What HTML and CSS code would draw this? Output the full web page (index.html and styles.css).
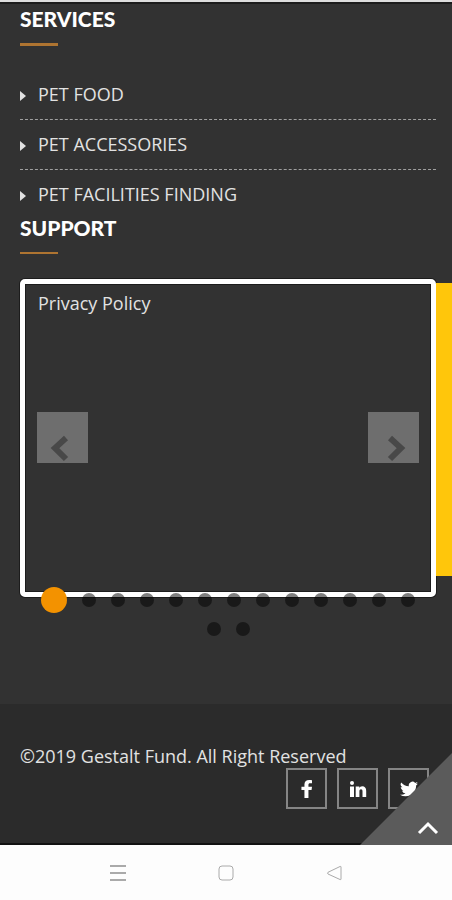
FILE: index.html
```html
<!DOCTYPE html>
<html lang="en">
<head>
  <meta charset="utf-8">
  <meta name="viewport" content="width=device-width, initial-scale=1">
  <title>Gestalt Fund</title>
  <link rel="stylesheet" href="styles.css">
</head>
<body>
  <main class="content">
    <section>
      <h2 class="title title-thick">SERVICES</h2>
      <ul class="links">
        <li><a href="#">PET FOOD</a></li>
        <li><a href="#">PET ACCESSORIES</a></li>
        <li><a href="#">PET FACILITIES FINDING</a></li>
      </ul>
    </section>
    <section>
      <h2 class="title">SUPPORT</h2>
      <div class="slider-row">
        <div class="slider">
          <a class="policy" href="#">Privacy Policy</a>
          <div class="arrows">
            <button class="arrow" type="button" aria-label="Previous">
              <svg width="51" height="51" viewBox="0 0 51 51"><path d="M29 26 18 36 29 47"/></svg>
            </button>
            <button class="arrow" type="button" aria-label="Next">
              <svg width="51" height="51" viewBox="0 0 51 51"><path d="M22 26 33 36 22 47"/></svg>
            </button>
          </div>
        </div>
        <div class="next-panel"></div>
      </div>
      <div class="dots">
        <button class="dot active" type="button" aria-label="Slide 1"></button>
        <button class="dot" type="button" aria-label="Slide 2"></button>
        <button class="dot" type="button" aria-label="Slide 3"></button>
        <button class="dot" type="button" aria-label="Slide 4"></button>
        <button class="dot" type="button" aria-label="Slide 5"></button>
        <button class="dot" type="button" aria-label="Slide 6"></button>
        <button class="dot" type="button" aria-label="Slide 7"></button>
        <button class="dot" type="button" aria-label="Slide 8"></button>
        <button class="dot" type="button" aria-label="Slide 9"></button>
        <button class="dot" type="button" aria-label="Slide 10"></button>
        <button class="dot" type="button" aria-label="Slide 11"></button>
        <button class="dot" type="button" aria-label="Slide 12"></button>
        <button class="dot" type="button" aria-label="Slide 13"></button>
        <button class="dot" type="button" aria-label="Slide 14"></button>
        <button class="dot" type="button" aria-label="Slide 15"></button>
      </div>
    </section>
  </main>

  <footer class="footer">
    <p class="copyright">©2019 Gestalt Fund. All Right Reserved</p>
    <div class="social">
      <a href="#" aria-label="Facebook">
        <svg width="20" height="20" viewBox="0 0 18 18"><path d="M13.500 1.200v2.700h-1.700c-1.200 0-1.500.6-1.500 1.400v1.700h3.200l-.4 2.900h-2.800V17H6.700V9.900H4V7h2.700V4.800C6.700 2.300 8.500 1 11 1c1 0 2 .1 2.500.2z"/></svg>
      </a>
      <a href="#" aria-label="LinkedIn">
        <svg width="18" height="18" viewBox="0 0 18 18"><circle cx="3" cy="3" r="2"/><path d="M1 6.500h4V17H1zM6.700 6.500h3.600v1.400c.5-.8 1.400-1.600 3-1.600 2.300 0 3.900 1.500 3.900 4.500V17h-3.700v-5.600c0-1.300-.5-2.100-1.500-2.100s-1.600.9-1.600 2.100V17H6.700z"/></svg>
      </a>
      <a href="#" aria-label="Twitter">
        <svg width="18" height="18" viewBox="0 0 24 24"><path d="M24 4.600c-.9.400-1.800.7-2.800.8a4.900 4.900 0 0 0 2.100-2.700c-1 .6-2 1-3.100 1.200a4.900 4.900 0 0 0-8.400 4.500C7.700 8.200 4.100 6.300 1.700 3.200a4.900 4.900 0 0 0 1.500 6.600c-.8 0-1.600-.2-2.200-.6v.1c0 2.400 1.700 4.400 3.900 4.800-.7.200-1.500.2-2.200.1a4.900 4.900 0 0 0 4.600 3.400A9.900 9.900 0 0 1 0 19.600a14 14 0 0 0 7.500 2.200c9.100 0 14-7.500 14-14v-.6c1-.7 1.800-1.600 2.500-2.600z"/></svg>
      </a>
    </div>
    <a class="to-top" href="#" aria-label="Back to top">
      <svg width="24" height="18" viewBox="0 0 24 18"><path d="M3 14 12 5 21 14"/></svg>
    </a>
  </footer>

  <nav class="navbar">
    <button type="button" aria-label="Recent apps">
      <svg width="20" height="20" viewBox="0 0 20 20"><path d="M2 3H18M2 10H18M2 17H18"/></svg>
    </button>
    <button type="button" aria-label="Home">
      <svg width="20" height="20" viewBox="0 0 20 20"><rect x="3" y="3" width="14" height="14" rx="3"/></svg>
    </button>
    <button type="button" aria-label="Back">
      <svg width="20" height="20" viewBox="0 0 20 20"><path d="M17 4V16Q17 17 16 16.500L4 11Q3 10 4 9.300L16 3.500Q17 3 17 4Z"/></svg>
    </button>
  </nav>
</body>
</html>
```
FILE: styles.css
```css
* {
  box-sizing: border-box;
}

body {
  margin: 0;
  min-height: 100vh;
  display: flex;
  flex-direction: column;
  background: #323232;
  color: #e2e2e2;
  font-family: "Open Sans", "Noto Sans", sans-serif;
  font-size: 18px;
  line-height: 24px;
}

a {
  color: inherit;
  text-decoration: none;
}

button {
  padding: 0;
  border: 0;
  background: none;
}

svg {
  display: block;
}

.content {
  flex: 1;
  padding: 4px 16px 0 20px;
  border-top: 2px solid #dedede;
  box-shadow: inset 0 2px 0 #1c1c1c;
}

.title {
  margin: 0;
  color: #fff;
  font-family: Lato, sans-serif;
  font-size: 21px;
  font-weight: 900;
  line-height: 26px;
}

.title::after {
  content: "";
  display: block;
  width: 38px;
  height: 2px;
  margin-top: 11px;
  background: #ae7431;
}

.title-thick::after {
  height: 3px;
}

.links {
  margin: 24px 0 0;
  padding: 0;
  list-style: none;
}

.links li {
  display: flex;
  align-items: center;
  gap: 12px;
  height: 50px;
  padding-bottom: 2px;
  border-bottom: 1px dashed #a0a0a0;
}

.links li::before {
  content: "";
  margin-top: 4px;
  border-left: 6px solid #e2e2e2;
  border-top: 5px solid transparent;
  border-bottom: 5px solid transparent;
}

.links li:last-child {
  height: 45px;
  padding: 2px 0 0;
  border-bottom: 0;
}

.slider-row {
  display: flex;
  margin: 25px -16px 0 0;
}

.slider {
  flex: 1;
  height: 318px;
  padding: 7px 12px;
  border: 5px solid #fff;
  border-radius: 5px;
  box-shadow: 0 0 0 1px #1c1c1c, inset 0 0 0 1px #1c1c1c;
}

.policy {
  display: block;
  margin-left: 1px;
}

.arrows {
  display: flex;
  justify-content: space-between;
  margin-top: 97px;
}

.arrow {
  background: #6e6e6e;
}

.arrow path {
  fill: none;
  stroke: #484848;
  stroke-width: 6;
}

.next-panel {
  width: 16px;
  margin: 4px 0 21px;
  background: #ffc60b;
}

.dots {
  position: relative;
  display: flex;
  flex-wrap: wrap;
  align-items: center;
  justify-content: center;
  gap: 9px 15px;
  margin-top: -10px;
  padding: 0 12px;
}

.dot {
  width: 14px;
  height: 14px;
  border-radius: 50%;
  background: rgba(0, 0, 0, 0.5);
}

.dot.active {
  width: 26px;
  height: 26px;
  background: #f39200;
}

.footer {
  position: relative;
  padding: 40px 23px 34px 20px;
  border-bottom: 2px solid #111;
  background: #2b2b2b;
}

.copyright {
  margin: 0;
}

.social {
  display: flex;
  justify-content: flex-end;
  gap: 10px;
}

.social a {
  display: flex;
  align-items: center;
  justify-content: center;
  width: 41px;
  height: 41px;
  border: 2px solid #858585;
}

.social svg {
  fill: #fff;
}

/* folded corner over the social links */
.to-top {
  position: absolute;
  right: 0;
  bottom: -2px;
  display: flex;
  align-items: flex-end;
  justify-content: flex-end;
  width: 92px;
  height: 92px;
  padding: 0 12px 8px 0;
  background: #5b5b5b;
  clip-path: polygon(100% 0, 100% 100%, 0 100%);
}

.to-top path {
  fill: none;
  stroke: #fff;
  stroke-width: 3;
}

.navbar {
  display: flex;
  align-items: center;
  justify-content: center;
  gap: 88px;
  height: 55px;
  background: #fdfdfd;
}

.navbar svg {
  fill: none;
  stroke: #aaa;
  stroke-width: 2;
}

.navbar rect,
.navbar button:last-child path {
  stroke-width: 1;
}
```
